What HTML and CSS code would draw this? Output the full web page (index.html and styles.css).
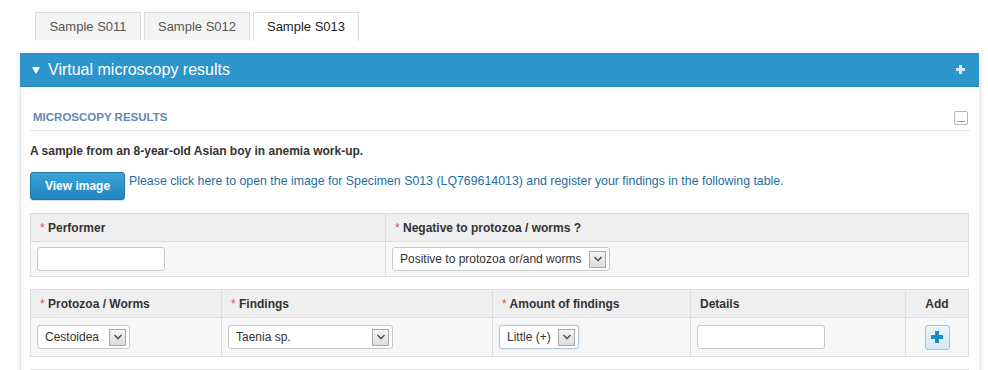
FILE: index.html
```html
<!DOCTYPE html>
<html>
<head>
<meta charset="utf-8">
<link rel="stylesheet" href="styles.css">
</head>
<body>
<div class="tabs">
  <div class="tab">Sample S011</div>
  <div class="tab">Sample S012</div>
  <div class="tab active">Sample S013</div>
</div>
<div class="panel">
  <div class="panel-head">
    <span class="caret"></span>
    <span class="panel-title">Virtual microscopy results</span>
    <span class="head-plus"></span>
  </div>
  <div class="panel-body">
    <div class="section-head">
      <span class="section-title">MICROSCOPY RESULTS</span>
      <span class="minimize"></span>
    </div>
    <p class="desc">A sample from an 8-year-old Asian boy in anemia work-up.</p>
    <div class="view-row">
      <button class="btn-view">View image</button>
      <a class="view-link">Please click here to open the image for Specimen S013 (LQ769614013) and register your findings in the following table.</a>
    </div>
    <table class="grid grid1">
      <colgroup><col style="width:355px"><col></colgroup>
      <tr class="hrow"><th><span class="req">*</span> Performer</th><th><span class="req">*</span> Negative to protozoa / worms ?</th></tr>
      <tr class="brow">
        <td><span class="input w127"></span></td>
        <td><span class="select w217"><span class="sel-text">Positive to protozoa or/and worms</span><span class="arrow"><svg width="10" height="6" viewBox="0 0 10 6"><path d="M1.5 1 L5 4.5 L8.5 1" fill="none" stroke="#555" stroke-width="1.6"/></svg></span></span></td>
      </tr>
    </table>
    <table class="grid grid2">
      <colgroup><col style="width:191px"><col style="width:271px"><col style="width:198px"><col style="width:215px"><col></colgroup>
      <tr class="hrow">
        <th><span class="req">*</span> Protozoa / Worms</th>
        <th><span class="req">*</span> Findings</th>
        <th><span class="req">*</span> Amount of findings</th>
        <th>Details</th>
        <th class="center">Add</th>
      </tr>
      <tr class="brow2">
        <td><span class="select w92"><span class="sel-text">Cestoidea</span><span class="arrow"><svg width="10" height="6" viewBox="0 0 10 6"><path d="M1.5 1 L5 4.5 L8.5 1" fill="none" stroke="#555" stroke-width="1.6"/></svg></span></span></td>
        <td><span class="select w164"><span class="sel-text">Taenia sp.</span><span class="arrow"><svg width="10" height="6" viewBox="0 0 10 6"><path d="M1.5 1 L5 4.5 L8.5 1" fill="none" stroke="#555" stroke-width="1.6"/></svg></span></span></td>
        <td><span class="select w79 sel-focus"><span class="sel-text">Little (+)</span><span class="arrow"><svg width="10" height="6" viewBox="0 0 10 6"><path d="M1.5 1 L5 4.5 L8.5 1" fill="none" stroke="#555" stroke-width="1.6"/></svg></span></span></td>
        <td><span class="input w127"></span></td>
        <td class="center"><span class="add-btn"><svg width="12" height="12" viewBox="0 0 12 12"><path d="M4 0h4v4h4v4h-4v4h-4v-4h-4v-4h4z" fill="#1b8ccc"/></svg></span></td>
      </tr>
    </table>
    <div class="next-line"></div>
  </div>
</div>
</body>
</html>
```
FILE: styles.css
```css
html, body {
  margin: 0;
  padding: 0;
  background: #fff;
  font-family: "Liberation Sans", Arial, sans-serif;
  color: #333;
  overflow: hidden;
}
.tabs {
  display: flex;
  gap: 3px;
  padding: 12px 0 0 35px;
  height: 29px;
}
.tab {
  box-sizing: border-box;
  width: 106px;
  height: 28px;
  border: 1px solid #dcdcdc;
  border-bottom: none;
  background: #f4f4f4;
  color: #555;
  font-size: 13px;
  line-height: 27px;
  text-align: center;
}
.tab.active {
  background: #fff;
  color: #222;
  height: 29px;
}
.panel {
  margin: 12px 9px 0 20px;
  box-shadow: 1px 0 6px rgba(0,0,0,0.13);
}
.panel-head {
  height: 34px;
  background: #2c95ca;
  border-bottom: 1px solid #2585b8;
  box-sizing: border-box;
  display: flex;
  align-items: center;
  padding: 0 14px 0 12px;
  color: #fff;
}
.caret {
  width: 0;
  height: 0;
  border-left: 4.5px solid transparent;
  border-right: 4.5px solid transparent;
  border-top: 7px solid #fff;
  margin-right: 8px;
  margin-top: 1px;
}
.panel-title {
  font-size: 16px;
  flex: 1;
  line-height: 20px;
}
.head-plus {
  position: relative;
  width: 9px;
  height: 9px;
}
.head-plus::before, .head-plus::after {
  content: "";
  position: absolute;
  background: #d5e9f5;
}
.head-plus::before { left: 3px; top: 0; width: 3px; height: 9px; }
.head-plus::after { left: 0; top: 3px; width: 9px; height: 3px; }
.panel-body {
  background: #fff;
  border-left: 1px solid #e4e4e4;
  padding: 0 9px 0 9px;
  height: 300px;
}
.section-head {
  display: flex;
  align-items: flex-end;
  justify-content: space-between;
  height: 44px;
  box-sizing: border-box;
  padding: 0 3px 5px 3px;
  border-bottom: 1px solid #e6e6e6;
}
.section-title {
  font-size: 11.5px;
  font-weight: bold;
  color: #6288b4;
  line-height: 14px;
  margin-bottom: 1px;
}
.minimize {
  width: 14px;
  height: 14px;
  box-sizing: border-box;
  border: 1px solid #b5b5b5;
  border-radius: 2px;
  position: relative;
  margin-right: -1px;
}
.minimize::after {
  content: "";
  position: absolute;
  left: 2px;
  right: 2px;
  bottom: 2px;
  height: 1px;
  background: #999;
}
.desc {
  margin: 13px 0 0 0;
  font-size: 12px;
  font-weight: bold;
  color: #333;
  line-height: 14px;
}
.view-row {
  display: flex;
  align-items: flex-start;
  margin-top: 14px;
}
.btn-view {
  width: 95px;
  height: 28px;
  border: 1px solid #2477a8;
  border-radius: 3px;
  background: linear-gradient(#3aa3d8, #2185bf);
  color: #fff;
  font-family: "Liberation Sans", Arial, sans-serif;
  font-size: 12px;
  font-weight: bold;
  padding: 0;
  box-shadow: 0 1px 1px rgba(0,0,0,0.15);
}
.view-link {
  color: #1e6d9e;
  font-size: 12.35px;
  margin-left: 4px;
  margin-top: 2px;
  line-height: 14px;
}
.grid {
  width: 939px;
  border-collapse: collapse;
  table-layout: fixed;
  font-size: 12px;
}
.grid1 { margin-top: 13px; }
.grid2 { margin-top: 12px; }
.grid th, .grid td {
  border: 1px solid #dddddd;
  padding: 0;
  text-align: left;
}
.grid th {
  background: #efefef;
  height: 27px;
  font-weight: bold;
  color: #333;
  padding-left: 9px;
}
.grid td {
  background: #f7f7f7;
  padding-left: 6px;
}
.grid th.center, .grid td.center {
  text-align: center;
  padding-left: 0;
}
.req {
  color: #d9534f;
  font-weight: normal;
}
.brow td { height: 34px; }
.brow2 td { height: 38px; }
.input {
  display: inline-block;
  box-sizing: border-box;
  height: 24px;
  background: #fff;
  border: 1px solid #c8c8c8;
  border-radius: 3px;
  vertical-align: middle;
}
.w127 { width: 128px; }
.select {
  display: inline-flex;
  align-items: center;
  justify-content: space-between;
  box-sizing: border-box;
  height: 24px;
  background: #fff;
  border: 1px solid #c8c8c8;
  border-radius: 3px;
  padding: 0 3px 0 7px;
  vertical-align: middle;
  font-size: 12px;
  color: #333;
}
.sel-focus {
  border-color: #b9c9d6;
  box-shadow: 0 0 2px rgba(80,140,190,0.35);
}
.w217 { width: 218px; }
.w92 { width: 93px; }
.w164 { width: 165px; }
.w79 { width: 80px; }
.arrow {
  box-sizing: border-box;
  width: 17px;
  height: 17px;
  border: 1px solid #a9a9a9;
  background: linear-gradient(#f4f4f4, #dcdcdc);
  display: flex;
  align-items: center;
  justify-content: center;
}
.add-btn {
  display: inline-flex;
  align-items: center;
  justify-content: center;
  box-sizing: border-box;
  width: 25px;
  height: 25px;
  border: 1px solid #a7c4d6;
  border-radius: 3px;
  background: linear-gradient(#eaf4fa, #d5e8f3);
  vertical-align: middle;
}
.next-line {
  margin-top: 12px;
  height: 1px;
  background: #dddddd;
  width: 939px;
}
```
